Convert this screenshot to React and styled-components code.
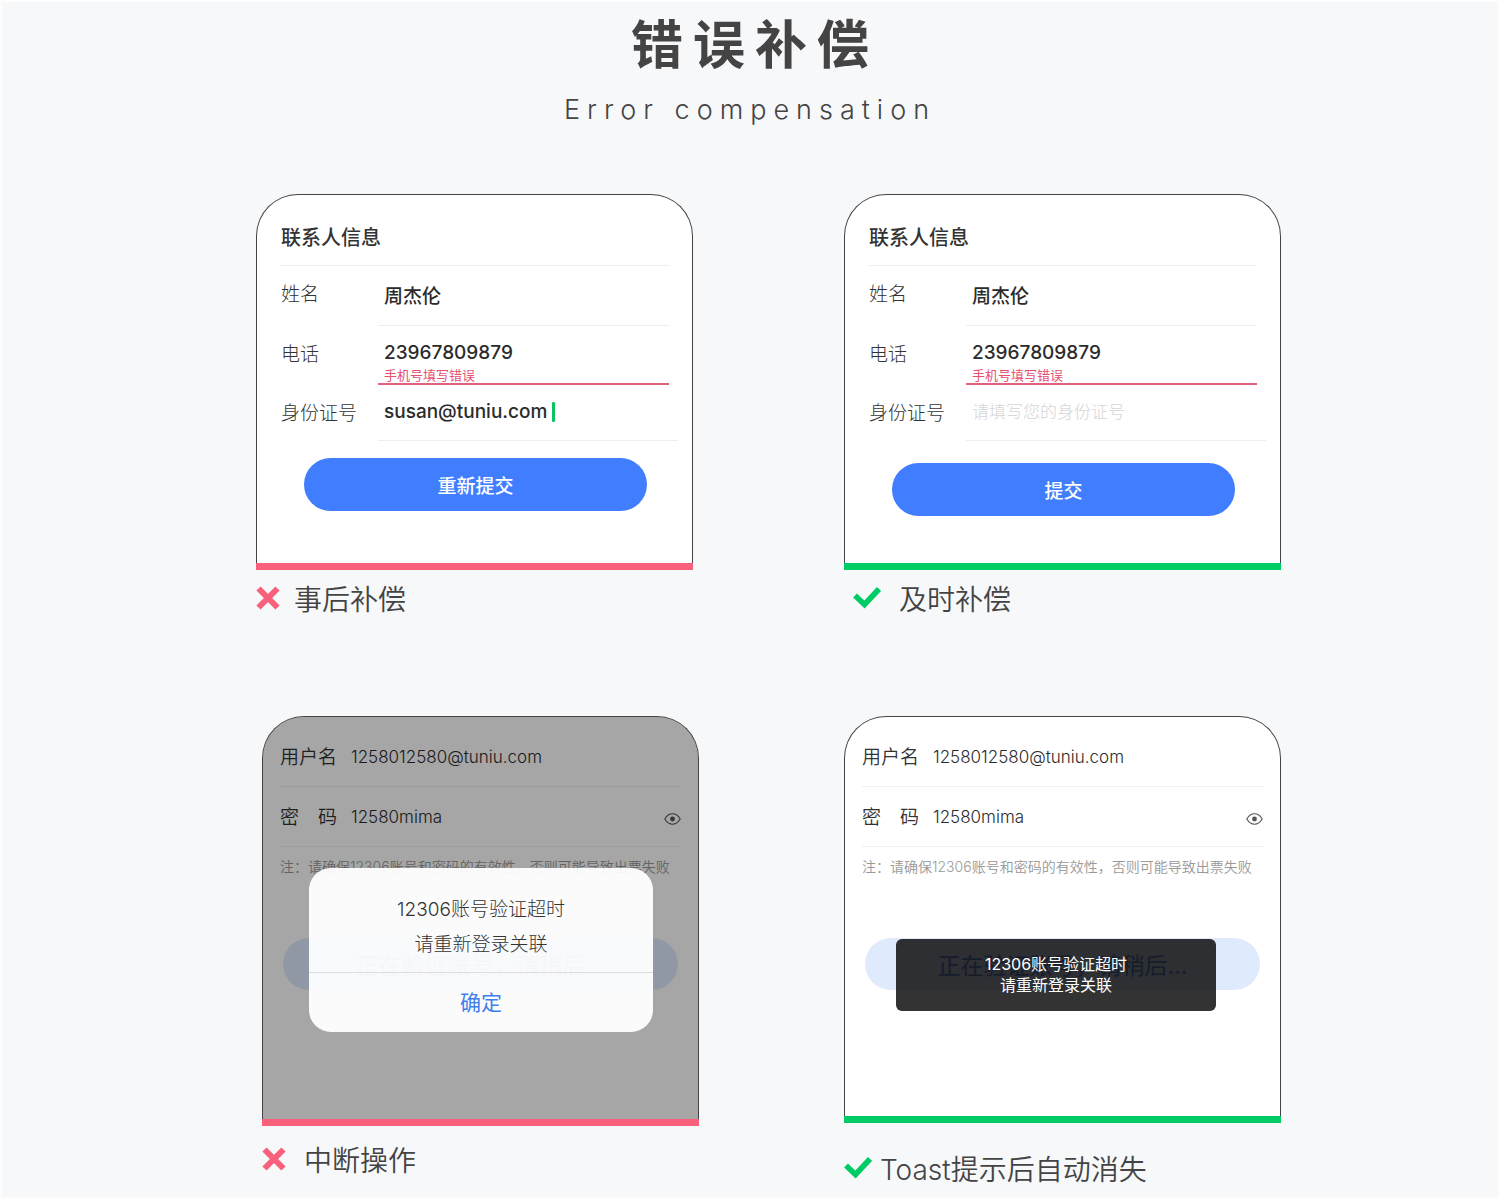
import React from "react";
import styled, { createGlobalStyle } from "styled-components";

const GlobalStyle = createGlobalStyle`
  * {
    box-sizing: border-box;
  }
  body {
    margin: 0;
    background: #f7f8fa;
    color: #333;
    font-family: Inter, "Noto Sans CJK SC", sans-serif;
  }
  input, button {
    font-family: inherit;
  }
`;

const Page = styled.main`
  min-height: 100vh;
  border: 2px solid #fdfdfe;
  padding: 12px 0 0;
`;

const Header = styled.header`
  text-align: center;
  color: #444;
`;

const Title = styled.h1`
  margin: 0;
  padding-left: 10px;
  font-size: 52px;
  line-height: 64px;
  font-weight: 700;
  letter-spacing: 10px;
`;

const Subtitle = styled.p`
  margin: 12px 0 0;
  font-size: 27px;
  line-height: 40px;
  font-weight: 300;
  letter-spacing: 7px;
`;

const Pair = styled.section`
  display: grid;
  grid-template-columns: 1fr 1fr;
  column-gap: ${props => props.$gap}px;
  align-items: start;
  margin-top: ${props => props.$top}px;
  padding: 0 217px 0 ${props => props.$left}px;
`;

const Figure = styled.figure`
  margin: 0;
`;

const Card = styled.div`
  position: relative;
  height: ${props => props.$height}px;
  border: 1px solid #444;
  border-bottom: 0;
  border-radius: 42px 42px 0 0;
  background: #fff;
  overflow: hidden;
`;

const Bar = styled.div`
  height: 7px;
  background: ${props => props.$good ? "#00cc66" : "#f9607c"};
`;

const Caption = styled.figcaption`
  display: flex;
  align-items: center;
  gap: ${props => props.$gap}px;
  padding: ${props => props.$top}px 0 0 ${props => props.$indent || 0}px;
  color: #444;
  font-size: 28px;
  line-height: 40px;
  font-weight: 350;
  white-space: nowrap;

  svg {
    flex: none;
    margin-bottom: 4px;
  }
`;

/* contact form */

const ContactForm = styled.form`
  padding: 27px 14px 0 24px;
`;

const SectionTitle = styled.h2`
  margin: 0 9px 0 -1px;
  padding: 0 0 11px 1px;
  border-bottom: 1px solid #eee;
  font-size: 20px;
  line-height: 32px;
  font-weight: 500;
`;

const Row = styled.div`
  display: grid;
  grid-template-columns: 97px 1fr;
  height: ${props => props.$height}px;
  margin-right: ${props => props.$wide ? 0 : 9}px;
`;

const Label = styled.label`
  padding-top: 15px;
  font-size: 19px;
  line-height: 28px;
  font-weight: 300;
`;

const Field = styled.div`
  display: flex;
  flex-direction: column;
  padding: ${props => props.$top}px 0 0 6px;
  border-bottom: ${props => props.$error ? "2px solid #e0607e" : "1px solid #eee"};
`;

const Input = styled.input`
  width: 100%;
  height: 28px;
  padding: 0;
  border: 0;
  outline: 0;
  background: none;
  color: #2b2b2b;
  font-size: 19px;
  line-height: 28px;
  font-weight: 500;

  &::placeholder {
    color: #d5d5d5;
    font-size: 17px;
    font-weight: 300;
    opacity: 1;
  }
`;

const TypingLine = styled.div`
  display: flex;
  align-items: center;
  gap: 5px;

  ${Input} {
    width: auto;
    field-sizing: content;
  }
`;

const Caret = styled.span`
  width: 3px;
  height: 20px;
  border-radius: 1px;
  background: #0bc461;
`;

const ErrorText = styled.span`
  color: #e8506f;
  font-size: 13px;
  line-height: 16px;
`;

const Submit = styled.button`
  display: block;
  width: calc(100% - 54px);
  height: 53px;
  margin: ${props => props.$top}px 0 0 23px;
  padding: 0;
  border: 0;
  border-radius: 27px;
  background: #407eff;
  color: #fff;
  font-size: 19px;
  font-weight: 500;
`;

/* account form */

const AccountForm = styled.form`
  padding: 10px 17px 0;
`;

const AccountRow = styled.div`
  display: grid;
  grid-template-columns: 71px 1fr auto;
  align-items: center;
  height: 60px;
  border-bottom: 1px solid #f0f0f0;

  label {
    padding-bottom: 2px;
    font-size: 19px;
    font-weight: 350;
    white-space: nowrap;
  }
  ${Input} {
    font-size: 17px;
    font-weight: 350;
  }
`;

const EyeButton = styled.button`
  display: flex;
  padding: 4px 0 0;
  border: 0;
  background: none;
  color: #555;
`;

const Note = styled.p`
  margin: 9px 0 0;
  color: #999;
  font-size: 14px;
  line-height: 22px;
  font-weight: 350;
  white-space: nowrap;
`;

const Pending = styled.button`
  display: block;
  width: calc(100% - 6px);
  height: 52px;
  margin: 60px 3px 0;
  padding: 0;
  border: 0;
  border-radius: 26px;
  background: #dfeafd;
  color: #6f8cd8;
  font-size: 23px;
`;

const Mask = styled.div`
  position: absolute;
  inset: 0;
  background: rgba(0, 0, 0, 0.35);
`;

const Dialog = styled.div`
  position: absolute;
  top: 151px;
  left: 46px;
  right: 45px;
  border-radius: 22px;
  background: rgba(255, 255, 255, 0.95);
  overflow: hidden;
  text-align: center;

  p {
    margin: 0;
    padding: 24px 0 10px;
    font-size: 19px;
    line-height: 35px;
    font-weight: 300;
  }
  button {
    width: 100%;
    height: 60px;
    padding: 0 0 4px;
    border: 0;
    border-top: 1px solid #ddd;
    background: none;
    color: #407eee;
    font-size: 21px;
  }
`;

const Toast = styled.div`
  position: absolute;
  top: 222px;
  left: 51px;
  right: 64px;
  padding: 15px 0;
  border-radius: 6px;
  background: rgba(0, 0, 0, 0.8);
  color: #fff;
  font-size: 16px;
  line-height: 21px;
  text-align: center;
`;

const Cross = () => (
  <svg width="24" height="24" viewBox="0 0 24 24" aria-hidden="true">
    <path d="M2.5 2.5 21.5 21.5M21.5 2.5 2.5 21.5" stroke="#f9607c" strokeWidth="6" />
  </svg>
);

const Check = () => (
  <svg width="28" height="22" viewBox="0 0 28 22" aria-hidden="true">
    <path d="M2 8.5 11.5 17.5 26 2" fill="none" stroke="#00cc66" strokeWidth="5.500" />
  </svg>
);

const Eye = () => (
  <svg width="17" height="12" viewBox="0 0 17 12" aria-hidden="true">
    <path
      d="M.8 6C2.8 2.6 5.4 .8 8.5 .8S14.2 2.6 16.2 6C14.2 9.4 11.6 11.2 8.5 11.2S2.8 9.4 .8 6Z"
      fill="none"
      stroke="currentColor"
      strokeWidth="1.1"
    />
    <circle cx="8.5" cy="6" r="2.4" fill="currentColor" />
  </svg>
);

const Contact = ({ id, children, submit, submitTop }) => (
  <ContactForm onSubmit={e => e.preventDefault()}>
    <SectionTitle>联系人信息</SectionTitle>
    <Row $height={60}>
      <Label htmlFor={id + "-name"}>姓名</Label>
      <Field $top={17}>
        <Input id={id + "-name"} defaultValue="周杰伦" />
      </Field>
    </Row>
    <Row $height={59}>
      <Label htmlFor={id + "-phone"}>电话</Label>
      <Field $top={13} $error>
        <Input id={id + "-phone"} type="tel" defaultValue="23967809879" />
        <ErrorText>手机号填写错误</ErrorText>
      </Field>
    </Row>
    <Row $height={56} $wide>
      <Label htmlFor={id + "-card"}>身份证号</Label>
      <Field $top={13}>{children}</Field>
    </Row>
    <Submit type="submit" $top={submitTop}>{submit}</Submit>
  </ContactForm>
);

const Account = ({ id }) => (
  <AccountForm onSubmit={e => e.preventDefault()}>
    <AccountRow>
      <label htmlFor={id + "-user"}>用户名</label>
      <Input id={id + "-user"} defaultValue="1258012580@tuniu.com" />
    </AccountRow>
    <AccountRow>
      <label htmlFor={id + "-pass"}>密　码</label>
      <Input id={id + "-pass"} defaultValue="12580mima" />
      <EyeButton type="button" aria-label="显示密码"><Eye /></EyeButton>
    </AccountRow>
    <Note>注：请确保12306账号和密码的有效性，否则可能导致出票失败</Note>
    <Pending type="button">正在验证账号，请稍后...</Pending>
  </AccountForm>
);

export default function App() {
  return (
    <Page>
      <GlobalStyle />
      <Header>
        <Title>错误补偿</Title>
        <Subtitle>Error compensation</Subtitle>
      </Header>

      <Pair $top={64} $left={254} $gap={151}>
        <Figure>
          <Card $height={369}>
            <Contact id="late" submit="重新提交" submitTop={17}>
              <TypingLine>
                <Input id="late-card" defaultValue="susan@tuniu.com" />
                <Caret />
              </TypingLine>
            </Contact>
          </Card>
          <Bar />
          <Caption $top={10} $gap={14}><Cross />事后补偿</Caption>
        </Figure>
        <Figure>
          <Card $height={369}>
            <Contact id="timely" submit="提交" submitTop={22}>
              <Input id="timely-card" placeholder="请填写您的身份证号" />
            </Contact>
          </Card>
          <Bar $good />
          <Caption $top={10} $gap={18} $indent={9}><Check />及时补偿</Caption>
        </Figure>
      </Pair>

      <Pair $top={96} $left={260} $gap={145}>
        <Figure>
          <Card $height={403}>
            <Account id="blocked" />
            <Mask />
            <Dialog role="dialog">
              <p>12306账号验证超时<br />请重新登录关联</p>
              <button type="button">确定</button>
            </Dialog>
          </Card>
          <Bar />
          <Caption $top={15} $gap={18}><Cross />中断操作</Caption>
        </Figure>
        <Figure>
          <Card $height={400}>
            <Account id="toast" />
            <Toast role="status">12306账号验证超时<br />请重新登录关联</Toast>
          </Card>
          <Bar $good />
          <Caption $top={27} $gap={8}><Check />Toast提示后自动消失</Caption>
        </Figure>
      </Pair>
    </Page>
  );
}
